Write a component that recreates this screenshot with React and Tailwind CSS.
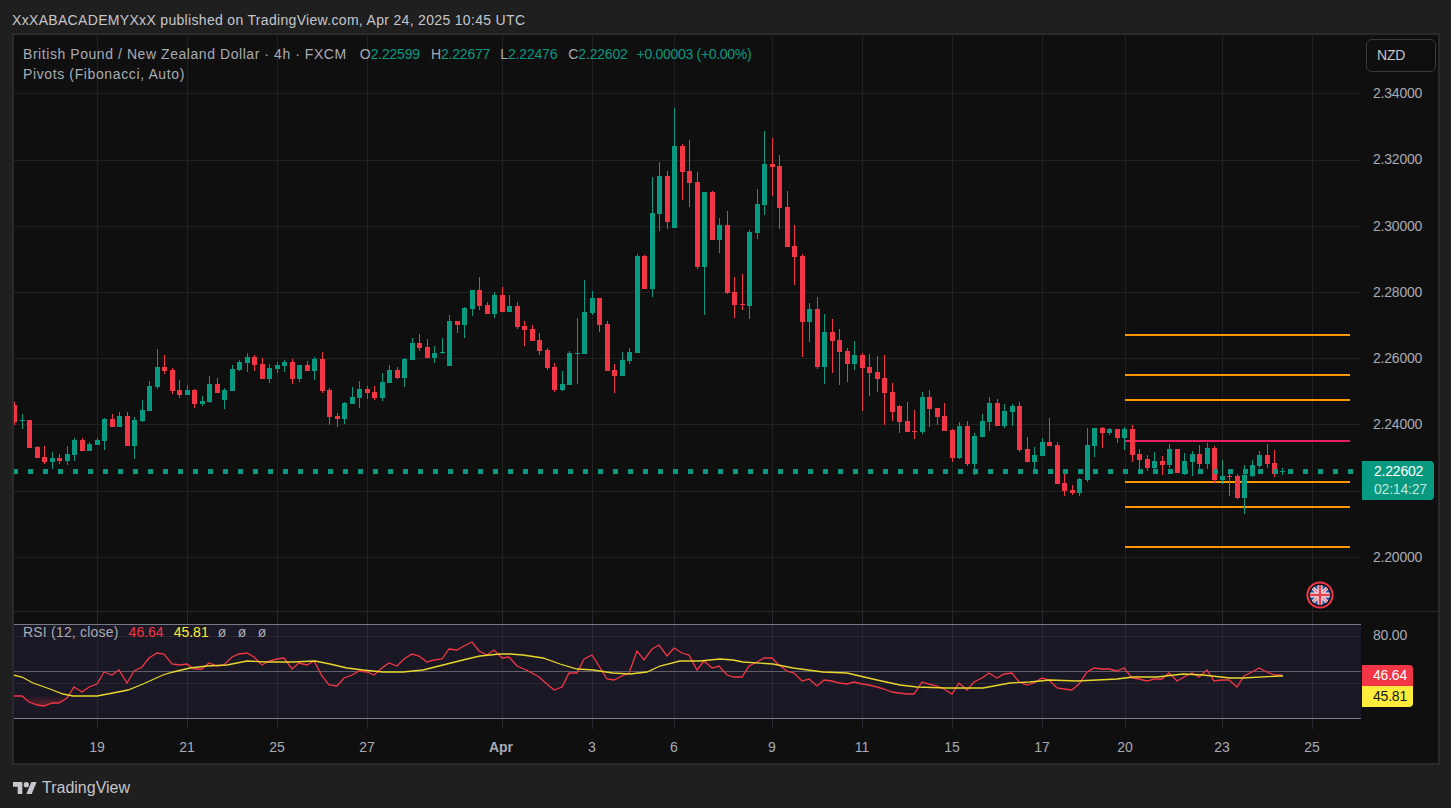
import React from 'react';

const GREEN = '#089981';
const RED = '#f23645';

// [high, bodyTop, bodyBottom, low, isRed], one row per 4h bar, page pixels
const candles = [
  [402,405,422,425,1],[414,420,421,429,0],[420,420,448,448,1],[446,447,458,458,1],[446,457,462,464,1],
  [452,458,462,469,0],[454,458,461,464,1],[446,454,461,465,0],[438,440,455,461,0],[438,440,451,451,1],
  [442,444,451,451,0],[438,440,445,445,0],[418,419,441,450,0],[414,419,427,427,1],[412,416,427,427,0],
  [412,416,446,446,1],[417,420,446,459,0],[400,410,421,422,0],[381,386,411,411,0],[349,367,387,389,0],
  [355,367,371,374,1],[368,370,391,394,1],[380,390,395,398,1],[385,390,395,395,0],[389,390,404,408,1],
  [396,401,404,406,0],[376,384,402,403,0],[378,384,393,393,1],[388,390,400,409,0],[365,369,391,391,0],
  [360,362,370,371,0],[353,357,363,372,0],[355,357,365,371,1],[358,364,379,379,1],[364,368,379,383,0],
  [362,365,369,373,0],[360,362,366,372,0],[359,362,379,384,1],[365,365,379,382,0],[361,365,371,371,1],
  [357,359,371,380,0],[352,359,391,393,1],[388,390,417,425,1],[413,416,419,427,1],[402,403,419,424,0],
  [387,397,404,404,0],[381,389,398,408,0],[386,389,393,399,1],[386,392,398,400,1],[373,382,398,401,0],
  [365,370,383,383,0],[367,370,378,379,1],[358,359,378,387,0],[338,343,360,360,0],[334,343,348,351,1],
  [339,347,358,358,1],[346,353,358,363,0],[338,352,353,354,0],[315,321,366,366,0],[321,321,325,333,1],
  [307,308,325,338,0],[290,290,309,316,0],[277,290,306,310,1],[302,305,314,314,1],[292,295,314,318,0],
  [287,295,312,312,1],[295,306,312,312,0],[302,306,327,329,1],[321,326,330,346,1],[325,329,341,341,1],
  [333,340,351,355,1],[348,350,368,370,1],[363,367,390,392,1],[371,384,390,391,0],[351,353,385,385,0],
  [318,353,354,384,0],[280,312,354,354,0],[291,298,313,315,0],[298,298,325,332,1],[321,324,371,371,1],
  [364,370,376,393,1],[352,360,376,376,0],[348,352,361,364,0],[254,256,353,353,0],[255,256,289,289,1],
  [177,213,289,297,0],[162,176,214,231,0],[171,176,222,229,1],[108,146,228,228,0],[144,146,172,200,1],
  [140,171,183,207,1],[172,182,267,269,1],[192,192,267,315,0],[191,192,240,240,1],[218,225,240,253,0],
  [211,225,293,294,1],[277,292,305,318,1],[274,304,305,310,1],[230,232,306,319,0],[189,204,233,239,0],
  [131,164,205,215,0],[138,164,167,196,1],[155,166,208,229,1],[191,207,247,247,1],[225,246,257,285,1],
  [254,256,322,357,1],[303,309,322,342,0],[297,309,367,369,1],[314,332,367,384,0],[319,332,341,373,1],
  [329,340,352,385,1],[348,351,364,382,1],[341,355,364,370,0],[353,355,368,411,1],[354,367,373,396,1],
  [356,372,379,392,1],[355,378,393,425,1],[383,392,412,421,1],[405,406,422,433,1],[402,421,432,432,1],
  [410,431,432,439,1],[392,397,432,434,0],[390,397,409,427,1],[408,408,417,425,1],[403,416,431,431,1],
  [429,430,458,462,1],[422,426,458,459,0],[421,426,464,466,1],[433,436,464,475,0],[414,421,437,437,0],
  [397,403,422,431,0],[399,403,426,426,1],[404,411,426,428,0],[404,406,412,426,0],[402,406,450,452,1],
  [437,449,462,462,1],[447,455,462,471,0],[438,442,456,456,0],[418,442,446,446,1],[442,445,484,484,1],
  [474,483,491,496,1],[485,490,493,495,1],[478,479,493,496,0],[428,445,480,482,0],[428,428,446,457,0],
  [427,428,433,448,1],[428,429,433,435,0],[429,429,438,443,1],[427,429,438,450,0],[425,429,455,462,1],
  [449,454,460,469,1],[455,459,468,471,1],[452,461,468,469,0],[456,461,465,475,1],[444,449,465,468,0],
  [449,449,473,473,1],[453,461,474,475,0],[451,454,462,476,0],[445,454,464,474,1],[443,448,464,469,0],
  [446,448,480,483,1],[460,476,480,484,0],[474,476,477,496,1],[474,476,498,499,1],[465,475,498,514,0],
  [460,465,476,477,0],[451,455,466,468,0],[444,455,464,468,1],[450,463,474,477,1],[468,471,472,475,0],
];

const gridX = [97, 187, 277, 367, 502, 592, 674, 772, 862, 952, 1042, 1125, 1222, 1312];
const gridY = [93, 160, 226, 292, 358, 424, 491, 557];
const prices = ['2.34000', '2.32000', '2.30000', '2.28000', '2.26000', '2.24000', '', '2.20000'];
const pivots = [
  [335, '#ff9800'], [375, '#ff9800'], [400, '#ff9800'], [441, '#e91e63'],
  [482, '#ff9800'], [507, '#ff9800'], [547, '#ff9800'],
];
const dots = Array.from({ length: 90 }, (_, i) => 13 + i * 15);
const ticks = [
  ['19', 97], ['21', 187], ['25', 277], ['27', 367], ['Apr', 501], ['3', 592], ['6', 674],
  ['9', 772], ['11', 862], ['15', 952], ['17', 1042], ['20', 1125], ['23', 1222], ['25', 1312],
];

// RSI read bar by bar, page y
const rsi = [
  696,696,702,705,706,703,703,698,687,692,687,684,672,675,670,683,671,667,658,653,
  654,664,665,664,669,669,663,666,665,657,654,653,657,665,661,659,658,669,663,665,
  661,676,685,686,678,675,671,672,675,668,663,666,659,654,656,662,660,659,649,650,
  646,642,651,655,650,658,657,666,669,673,677,684,690,687,673,673,659,655,666,679,
  680,676,673,651,660,649,645,656,648,653,655,670,661,668,666,675,677,677,666,662,
  658,658,665,671,673,681,679,686,680,681,683,684,682,684,685,687,689,692,693,694,
  694,682,684,686,689,694,683,690,682,678,673,678,674,673,682,685,683,678,680,688,
  689,690,684,672,668,669,669,671,668,678,679,681,679,679,673,681,677,673,677,670,
  681,680,680,687,676,672,668,672,675,675,
];

const rsiMa = [
  [13,675],[22,677],[33,683],[50,689],[63,694],[73,696],[97,696],[113,693],[128,690],[143,684],
  [163,675],[173,672],[190,668],[207,666],[227,665],[247,661],[267,662],[293,662],[315,661],[330,664],
  [347,668],[363,670],[383,672],[403,672],[423,670],[447,664],[467,659],[480,656],[500,654],[510,654],
  [523,655],[543,658],[560,664],[577,669],[593,670],[613,673],[630,674],[647,672],[660,666],[680,661],
  [700,661],[720,659],[733,660],[743,662],[773,664],[793,668],[823,672],[847,673],[877,680],[900,685],
  [917,687],[947,688],[980,688],[983,688],[1010,683],[1030,682],[1050,680],[1077,681],[1117,679],[1133,677],
  [1157,677],[1183,674],[1203,675],[1230,678],[1243,678],[1280,676],[1283,676],
];

const barX = (i) => Math.ceil(12 + 7.5 * i);
const rsiPoints = rsi.map((y, i) => `${barX(i) + 2},${y}`).join(' ');
const maPoints = rsiMa.map(([x, y]) => `${x},${y}`).join(' ');

const Legend = () => (
  <div className="absolute left-[9px] top-[9px] text-[14px] leading-[20px] text-[#a8abb4]">
    <div className="flex items-center whitespace-nowrap">
      <span className="tracking-[0.56px]">British Pound / New Zealand Dollar · 4h · FXCM</span>
      <span className="ml-[13px]">O</span>
      <span className="tracking-[-0.2px] text-[#089981]">2.22599</span>
      <span className="ml-[11px]">H</span>
      <span className="tracking-[-0.2px] text-[#089981]">2.22677</span>
      <span className="ml-[10px]">L</span>
      <span className="tracking-[-0.2px] text-[#089981]">2.22476</span>
      <span className="ml-[11px]">C</span>
      <span className="tracking-[-0.2px] text-[#089981]">2.22602</span>
      <span className="ml-[9px] tracking-[-0.3px] text-[#089981]">+0.00003 (+0.00%)</span>
    </div>
    <div className="tracking-[0.62px]">Pivots (Fibonacci, Auto)</div>
  </div>
);

const FlagBadge = () => (
  <g>
    <defs>
      <clipPath id="flag-clip">
        <circle cx="1320" cy="595" r="10" />
      </clipPath>
    </defs>
    <circle cx="1320" cy="595" r="12.6" fill="#131722" stroke={RED} strokeWidth="2" />
    <g clipPath="url(#flag-clip)">
      <rect x="1310" y="585" width="20" height="20" fill="#2a55a8" />
      <path d="M1309 584L1331 606M1331 584L1309 606" stroke="#f3e3e6" strokeWidth="3.4" />
      <path d="M1309 584L1331 606M1331 584L1309 606" stroke="#e8606f" strokeWidth="1.2" />
      <path d="M1320 584V606M1309 595H1331" stroke="#f3e3e6" strokeWidth="5" />
      <path d="M1320 584V606M1309 595H1331" stroke="#e5404f" strokeWidth="2.6" />
    </g>
  </g>
);

const MainPane = () => (
  <div className="relative flex-1">
    <svg className="block h-[576px] w-[1347px]" viewBox="14 35 1347 576">
      <g shapeRendering="crispEdges">
        {gridX.map((x) => <rect key={x} x={x} y="35" width="1" height="576" fill="#212121" />)}
        {gridY.map((y) => <rect key={y} x="14" y={y} width="1347" height="1" fill="#212121" />)}
        {pivots.map(([y, color]) => <rect key={y} x="1125" y={y - 1} width="225" height="2" fill={color} />)}
        {candles.map(([h, t, b, l, isRed], i) => (
          <g key={i} fill={isRed ? RED : GREEN}>
            <rect x={barX(i) + 2} y={h} width="1" height={l - h} />
            <rect x={barX(i)} y={t} width="5" height={Math.max(b - t, 1)} />
          </g>
        ))}
        {dots.map((x) => <rect key={x} x={x} y="469" width="5" height="5" fill={GREEN} />)}
      </g>
      <FlagBadge />
    </svg>
    <Legend />
  </div>
);

const PriceAxis = () => (
  <div className="relative w-[77px] pt-[25.6px] text-[14px] tracking-[-0.2px] text-[#a8abb4]">
    <div className="absolute left-[5px] top-[4px] flex h-[33px] w-[70px] items-center rounded-md border border-[#3a3a3a] pl-[10px] text-[#c4c6cc]">
      NZD
    </div>
    {prices.map((price, i) => (
      <div key={i} className="flex h-[66.2px] items-center pl-3">{price}</div>
    ))}
    <div className="absolute left-px top-[426px] flex h-[39px] w-[72px] flex-col justify-center rounded-r-sm bg-[#089981] pb-px pl-3 leading-[18px]">
      <span className="text-white">2.22602</span>
      <span className="text-[#bfe6de]">02:14:27</span>
    </div>
  </div>
);

const RsiPane = () => (
  <div className="relative flex-1">
    <svg className="block h-[117px] w-[1347px]" viewBox="14 612 1347 117">
      <defs>
        <linearGradient id="oversold" x1="0" y1="0" x2="0" y2="1">
          <stop offset="0" stopColor={RED} stopOpacity="0" />
          <stop offset="1" stopColor={RED} stopOpacity="0.35" />
        </linearGradient>
      </defs>
      <rect x="14" y="624" width="1347" height="95" fill="#1a1824" />
      <g shapeRendering="crispEdges">
        {gridX.map((x) => <rect key={x} x={x} y="612" width="1" height="117" fill="#2a2833" />)}
        <rect x="14" y="636" width="1347" height="1" fill="#2a2833" />
        <rect x="14" y="683" width="1347" height="1" fill="#2a2833" />
        <rect x="14" y="624" width="1347" height="1" fill="#787b86" />
        <rect x="14" y="671" width="1347" height="1" fill="#5f606c" />
        <rect x="14" y="718" width="1347" height="1" fill="#787b86" />
      </g>
      <path d="M24 696L30 702L37 705L44 706L52 703L59 703L66 696Z" fill="url(#oversold)" />
      <polyline points={rsiPoints} fill="none" stroke={RED} strokeWidth="1.3" />
      <polyline points={maPoints} fill="none" stroke="#e8d62e" strokeWidth="1.3" />
    </svg>
    <div className="absolute left-[9px] top-[10px] flex items-center text-[14px] leading-[20px] text-[#a8abb4]">
      <span className="tracking-[0.2px]">RSI (12, close)</span>
      <span className="ml-[10px] text-[#f23645]">46.64</span>
      <span className="ml-[10px] text-[#ffeb3b]">45.81</span>
      <span className="ml-[9px]">ø</span>
      <span className="ml-[11.5px]">ø</span>
      <span className="ml-[11.5px]">ø</span>
    </div>
  </div>
);

const RsiAxis = () => (
  <div className="w-[77px] pt-[13px] text-[14px] tracking-[-0.2px]">
    <div className="flex h-[21px] items-center pl-3 text-[#a8abb4]">80.00</div>
    <div className="ml-px mt-[19px] flex h-[21px] w-[51px] items-center rounded-tr-sm bg-[#f23645] pl-[11px] text-white">46.64</div>
    <div className="ml-px flex h-[21px] w-[51px] items-center rounded-br-sm bg-[#ffeb3b] pl-[11px] text-[#131722]">45.81</div>
  </div>
);

const TimeAxis = () => (
  <div className="relative h-[34px] text-[14px] text-[#a8abb4]">
    {ticks.map(([label, x]) => (
      <span
        key={`${label}-${x}`}
        className={`absolute top-[8px] -translate-x-1/2 ${label === 'Apr' ? 'font-bold' : ''}`}
        style={{ left: x - 14 }}
      >
        {label}
      </span>
    ))}
  </div>
);

export default function App() {
  return (
    <div className="flex h-[808px] w-[1451px] flex-col overflow-hidden bg-[#1f1f1f] font-['Liberation_Sans',sans-serif]">
      <div className="h-[33px] whitespace-nowrap pl-3 pt-[10px] text-[14px] leading-[20px] tracking-[0.32px] text-[#c4c6cc]">
        XxXABACADEMYXxX published on TradingView.com, Apr 24, 2025 10:45 UTC
      </div>

      <div className="ml-3 h-[732px] w-[1428px] border-2 border-[#2a2a2a] bg-[#0f0f0f]">
        <div className="flex h-[576px]">
          <MainPane />
          <PriceAxis />
        </div>
        <div className="h-px bg-[#2a2a2a]" />
        <div className="flex h-[117px]">
          <RsiPane />
          <RsiAxis />
        </div>
        <TimeAxis />
      </div>

      <div className="flex flex-1 items-center gap-[5px] pl-[13px] pt-[2px] text-[16px] text-[#c4c6cc]">
        <svg className="h-3 w-6" viewBox="0 4 36 18" fill="#c4c6cc">
          <path d="M14 22H7V11H0V4h14v18zM28 22h-8l7.5-18h8L28 22z" />
          <circle cx="20" cy="8" r="4" />
        </svg>
        <span>TradingView</span>
      </div>
    </div>
  );
}
